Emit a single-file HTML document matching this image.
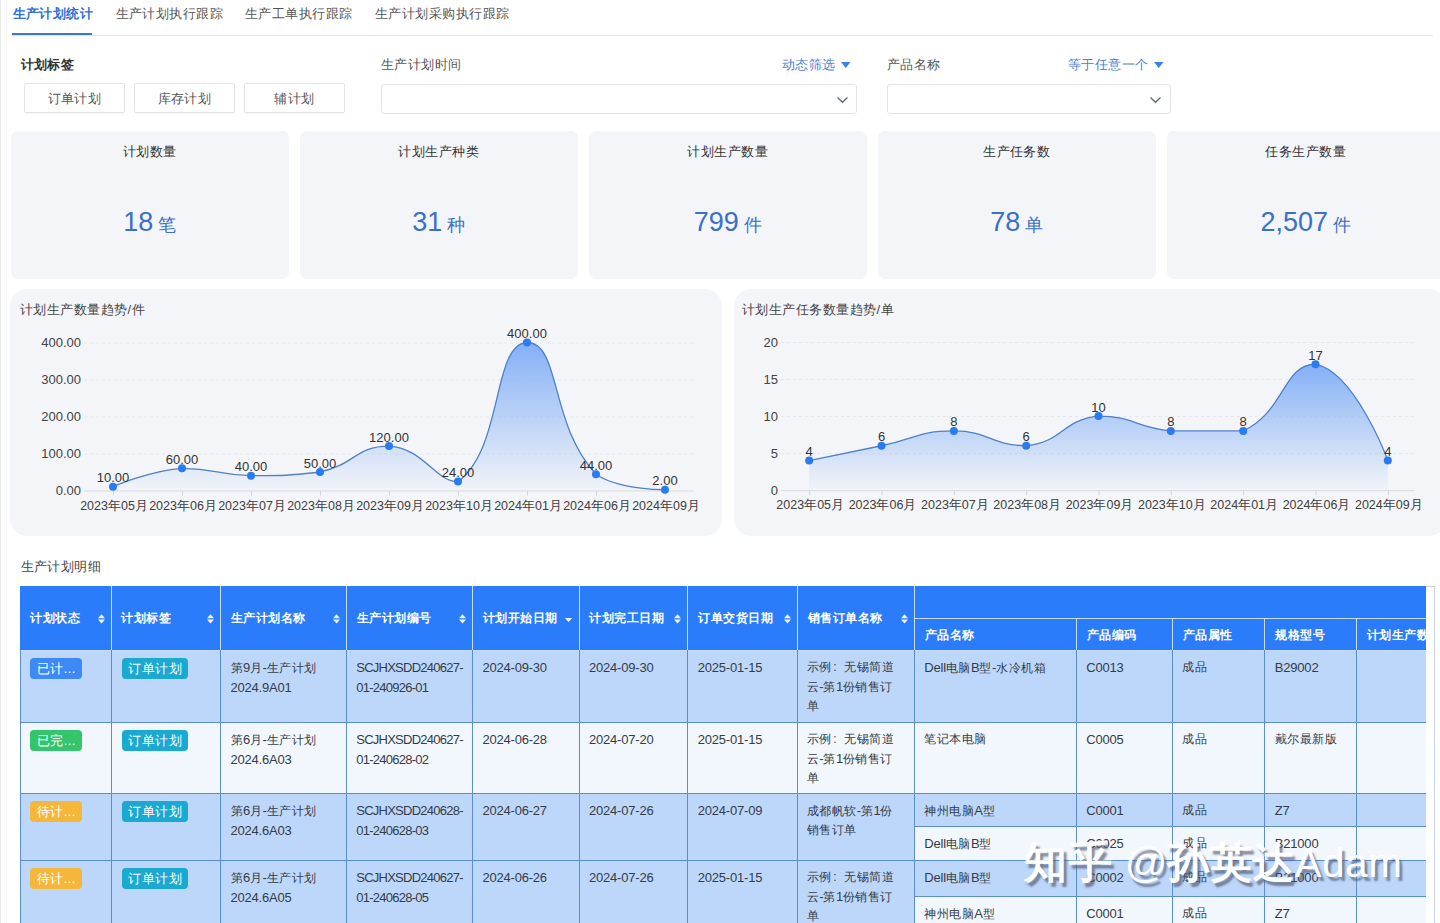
<!DOCTYPE html>
<html><head><meta charset="utf-8"><title>生产计划统计</title>
<style>
*{box-sizing:border-box;margin:0;padding:0}
html,body{width:1440px;height:923px;overflow:hidden;background:#fff;font-family:"Liberation Sans", sans-serif;color:#333}
.a{position:absolute;white-space:nowrap}
.tab{font-size:13px;letter-spacing:0.45px;line-height:16px;color:#555}
.btn{position:absolute;height:29.5px;top:83px;border:1px solid #e4e4e4;border-radius:2px;font-size:13px;letter-spacing:0.45px;line-height:28px;padding-top:1px;box-shadow:0 1px 1px rgba(0,0,0,0.03);text-align:center;color:#555;background:#fff}
.dd{position:absolute;top:84px;height:30px;border:1px solid #e1e4ea;border-radius:3px;background:#fff}
.card{position:absolute;top:131px;width:278px;height:148px;background:#f3f5f8;border-radius:7px;text-align:center}
.ct{position:absolute;left:0;right:0;top:13px;font-size:13px;letter-spacing:0.45px;line-height:16px;color:#333}
.cv{position:absolute;left:0;right:0;top:73px;line-height:36px;color:#3a70c8}
.cv b{font-weight:normal;font-size:27px}
.cv i{font-style:normal;font-size:18px;margin-left:5px}
.panel{position:absolute;top:289px;height:247px;width:712px;background:#f3f5f8;border-radius:17px}
.tb{font-size:12px;letter-spacing:0.5px;line-height:19px;color:#353c47}
.tb .l{font-size:13px;letter-spacing:-0.2px}
.tb.code .l{letter-spacing:-0.75px}
.tag{height:21px;border-radius:4px;color:#fff;font-size:13px;letter-spacing:0.45px;line-height:21px;text-align:center}
.pt{position:absolute;left:10px;top:13px;font-size:13px;letter-spacing:0.45px;line-height:16px;color:#444}
</style></head><body>

<div class="a" style="left:0;top:0;width:1px;height:923px;background:#e9e9e9"></div>
<div class="a" style="left:6px;top:0;width:1px;height:923px;background:#f6f6f6"></div>
<div class="a tab" style="left:12.5px;top:6px;color:#2f6fd6;font-weight:bold">生产计划统计</div>
<div class="a tab" style="left:115.6px;top:6px;">生产计划执行跟踪</div>
<div class="a tab" style="left:245px;top:6px;">生产工单执行跟踪</div>
<div class="a tab" style="left:375px;top:6px;">生产计划采购执行跟踪</div>
<div class="a" style="left:12px;top:35px;width:1421px;height:1px;background:#e2e5ea"></div>
<div class="a" style="left:12px;top:33px;width:80px;height:2px;background:#3a77d6"></div>
<div class="a tab" style="left:20.5px;top:57px;color:#333;font-weight:bold">计划标签</div>
<div class="btn" style="left:24px;width:101px">订单计划</div>
<div class="btn" style="left:134px;width:101px">库存计划</div>
<div class="btn" style="left:244px;width:101px">辅计划</div>
<div class="a tab" style="left:381px;top:57px;color:#555">生产计划时间</div>
<div class="a tab" style="left:782px;top:57px;color:#4a80cc">动态筛选</div>
<svg class="a" style="left:841px;top:62px" width="10" height="7"><path d="M0 0H9.5L4.75 6Z" fill="#3b7ff0"/></svg>
<div class="dd" style="left:381px;width:476px"></div>
<svg class="a" style="left:836px;top:96px" width="13" height="8"><path d="M1.5 1.5L6.5 6.3L11.5 1.5" fill="none" stroke="#5a6572" stroke-width="1.2"/></svg>
<div class="a tab" style="left:887px;top:57px;color:#555">产品名称</div>
<div class="a tab" style="left:1068px;top:57px;color:#4a80cc">等于任意一个</div>
<svg class="a" style="left:1154px;top:62px" width="10" height="7"><path d="M0 0H9.5L4.75 6Z" fill="#3b7ff0"/></svg>
<div class="dd" style="left:887px;width:284px"></div>
<svg class="a" style="left:1149px;top:96px" width="13" height="8"><path d="M1.5 1.5L6.5 6.3L11.5 1.5" fill="none" stroke="#5a6572" stroke-width="1.2"/></svg>
<div class="card" style="left:10.7px"><div class="ct">计划数量</div><div class="cv"><b>18</b><i>笔</i></div></div>
<div class="card" style="left:299.7px"><div class="ct">计划生产种类</div><div class="cv"><b>31</b><i>种</i></div></div>
<div class="card" style="left:588.7px"><div class="ct">计划生产数量</div><div class="cv"><b>799</b><i>件</i></div></div>
<div class="card" style="left:877.7px"><div class="ct">生产任务数</div><div class="cv"><b>78</b><i>单</i></div></div>
<div class="card" style="left:1166.7px"><div class="ct">任务生产数量</div><div class="cv"><b>2,507</b><i>件</i></div></div>
<div class="panel" style="left:10px"><div class="pt">计划生产数量趋势/件</div></div>
<div class="panel" style="left:734px"><div class="pt" style="left:8px">计划生产任务数量趋势/单</div></div>
<svg class="a" style="left:0;top:0" width="1440" height="923" font-family='"Liberation Sans", sans-serif'>
<defs><linearGradient id="g1" x1="0" y1="0" x2="0" y2="1"><stop offset="0" stop-color="#84b0f6"/><stop offset="1" stop-color="#84b0f6" stop-opacity="0.02"/></linearGradient></defs>
<line x1="84" y1="491.0" x2="694" y2="491.0" stroke="#d7dbe2" stroke-width="1"/>
<text x="81" y="495.0" text-anchor="end" font-size="13" fill="#444">0.00</text>
<line x1="84" y1="454.0" x2="694" y2="454.0" stroke="#e3e6ec" stroke-width="1" stroke-dasharray="3 3"/>
<text x="81" y="458.0" text-anchor="end" font-size="13" fill="#444">100.00</text>
<line x1="84" y1="417.0" x2="694" y2="417.0" stroke="#e3e6ec" stroke-width="1" stroke-dasharray="3 3"/>
<text x="81" y="421.0" text-anchor="end" font-size="13" fill="#444">200.00</text>
<line x1="84" y1="380.0" x2="694" y2="380.0" stroke="#e3e6ec" stroke-width="1" stroke-dasharray="3 3"/>
<text x="81" y="384.0" text-anchor="end" font-size="13" fill="#444">300.00</text>
<line x1="84" y1="343.0" x2="694" y2="343.0" stroke="#e3e6ec" stroke-width="1" stroke-dasharray="3 3"/>
<text x="81" y="347.0" text-anchor="end" font-size="13" fill="#444">400.00</text>
<path d="M113.00 486.80 C113.00 486.80 147.00 471.12 182.00 468.30 C216.00 468.30 216.43 474.77 251.00 475.70 C285.43 475.70 286.61 475.70 320.00 472.00 C355.61 464.36 355.39 446.10 389.00 446.10 C424.39 448.57 435.01 481.62 458.00 481.62 C504.01 447.08 491.75 344.39 527.00 342.50 C560.75 342.50 549.24 424.32 596.00 474.22 C618.24 489.76 665.00 489.76 665.00 489.76 L665.00 490.5 L113.00 490.5 Z" fill="url(#g1)"/>
<path d="M113.00 486.80 C113.00 486.80 147.00 471.12 182.00 468.30 C216.00 468.30 216.43 474.77 251.00 475.70 C285.43 475.70 286.61 475.70 320.00 472.00 C355.61 464.36 355.39 446.10 389.00 446.10 C424.39 448.57 435.01 481.62 458.00 481.62 C504.01 447.08 491.75 344.39 527.00 342.50 C560.75 342.50 549.24 424.32 596.00 474.22 C618.24 489.76 665.00 489.76 665.00 489.76" fill="none" stroke="#5080c6" stroke-width="1.3"/>
<line x1="113.5" y1="490.5" x2="113.5" y2="495.5" stroke="#d0d4db"/>
<text x="114.0" y="509.5" text-anchor="middle" font-size="12.5" fill="#404040">2023年05月</text>
<line x1="182.5" y1="490.5" x2="182.5" y2="495.5" stroke="#d0d4db"/>
<text x="183.0" y="509.5" text-anchor="middle" font-size="12.5" fill="#404040">2023年06月</text>
<line x1="251.5" y1="490.5" x2="251.5" y2="495.5" stroke="#d0d4db"/>
<text x="252.0" y="509.5" text-anchor="middle" font-size="12.5" fill="#404040">2023年07月</text>
<line x1="320.5" y1="490.5" x2="320.5" y2="495.5" stroke="#d0d4db"/>
<text x="321.0" y="509.5" text-anchor="middle" font-size="12.5" fill="#404040">2023年08月</text>
<line x1="389.5" y1="490.5" x2="389.5" y2="495.5" stroke="#d0d4db"/>
<text x="390.0" y="509.5" text-anchor="middle" font-size="12.5" fill="#404040">2023年09月</text>
<line x1="458.5" y1="490.5" x2="458.5" y2="495.5" stroke="#d0d4db"/>
<text x="459.0" y="509.5" text-anchor="middle" font-size="12.5" fill="#404040">2023年10月</text>
<line x1="527.5" y1="490.5" x2="527.5" y2="495.5" stroke="#d0d4db"/>
<text x="528.0" y="509.5" text-anchor="middle" font-size="12.5" fill="#404040">2024年01月</text>
<line x1="596.5" y1="490.5" x2="596.5" y2="495.5" stroke="#d0d4db"/>
<text x="597.0" y="509.5" text-anchor="middle" font-size="12.5" fill="#404040">2024年06月</text>
<line x1="665.5" y1="490.5" x2="665.5" y2="495.5" stroke="#d0d4db"/>
<text x="666.0" y="509.5" text-anchor="middle" font-size="12.5" fill="#404040">2024年09月</text>
<circle cx="113.0" cy="486.8" r="4" fill="#2b7bf0"/>
<text x="113.0" y="482.3" text-anchor="middle" font-size="13" fill="#333">10.00</text>
<circle cx="182.0" cy="468.3" r="4" fill="#2b7bf0"/>
<text x="182.0" y="463.8" text-anchor="middle" font-size="13" fill="#333">60.00</text>
<circle cx="251.0" cy="475.7" r="4" fill="#2b7bf0"/>
<text x="251.0" y="471.2" text-anchor="middle" font-size="13" fill="#333">40.00</text>
<circle cx="320.0" cy="472.0" r="4" fill="#2b7bf0"/>
<text x="320.0" y="467.5" text-anchor="middle" font-size="13" fill="#333">50.00</text>
<circle cx="389.0" cy="446.1" r="4" fill="#2b7bf0"/>
<text x="389.0" y="441.6" text-anchor="middle" font-size="13" fill="#333">120.00</text>
<circle cx="458.0" cy="481.6" r="4" fill="#2b7bf0"/>
<text x="458.0" y="477.1" text-anchor="middle" font-size="13" fill="#333">24.00</text>
<circle cx="527.0" cy="342.5" r="4" fill="#2b7bf0"/>
<text x="527.0" y="338.0" text-anchor="middle" font-size="13" fill="#333">400.00</text>
<circle cx="596.0" cy="474.2" r="4" fill="#2b7bf0"/>
<text x="596.0" y="469.7" text-anchor="middle" font-size="13" fill="#333">44.00</text>
<circle cx="665.0" cy="489.8" r="4" fill="#2b7bf0"/>
<text x="665.0" y="485.3" text-anchor="middle" font-size="13" fill="#333">2.00</text>
<line x1="781" y1="490.7" x2="1415" y2="490.7" stroke="#d7dbe2" stroke-width="1"/>
<text x="778" y="494.7" text-anchor="end" font-size="13" fill="#444">0</text>
<line x1="781" y1="453.6" x2="1415" y2="453.6" stroke="#e3e6ec" stroke-width="1" stroke-dasharray="3 3"/>
<text x="778" y="457.6" text-anchor="end" font-size="13" fill="#444">5</text>
<line x1="781" y1="416.6" x2="1415" y2="416.6" stroke="#e3e6ec" stroke-width="1" stroke-dasharray="3 3"/>
<text x="778" y="420.6" text-anchor="end" font-size="13" fill="#444">10</text>
<line x1="781" y1="379.5" x2="1415" y2="379.5" stroke="#e3e6ec" stroke-width="1" stroke-dasharray="3 3"/>
<text x="778" y="383.5" text-anchor="end" font-size="13" fill="#444">15</text>
<line x1="781" y1="342.5" x2="1415" y2="342.5" stroke="#e3e6ec" stroke-width="1" stroke-dasharray="3 3"/>
<text x="778" y="346.5" text-anchor="end" font-size="13" fill="#444">20</text>
<path d="M809.20 460.56 C809.20 460.56 845.37 453.15 881.53 445.74 C917.70 438.33 917.70 430.92 953.86 430.92 C990.02 430.92 991.06 445.74 1026.19 445.74 C1063.39 441.93 1061.32 419.91 1098.52 416.10 C1133.65 416.10 1134.31 427.18 1170.85 430.92 C1206.64 430.92 1212.53 430.92 1243.18 430.92 C1284.86 411.70 1282.99 364.23 1315.51 364.23 C1355.32 372.39 1387.84 460.56 1387.84 460.56 L1387.84 490.2 L809.20 490.2 Z" fill="url(#g1)"/>
<path d="M809.20 460.56 C809.20 460.56 845.37 453.15 881.53 445.74 C917.70 438.33 917.70 430.92 953.86 430.92 C990.02 430.92 991.06 445.74 1026.19 445.74 C1063.39 441.93 1061.32 419.91 1098.52 416.10 C1133.65 416.10 1134.31 427.18 1170.85 430.92 C1206.64 430.92 1212.53 430.92 1243.18 430.92 C1284.86 411.70 1282.99 364.23 1315.51 364.23 C1355.32 372.39 1387.84 460.56 1387.84 460.56" fill="none" stroke="#5080c6" stroke-width="1.3"/>
<line x1="809.7" y1="490.2" x2="809.7" y2="495.2" stroke="#d0d4db"/>
<text x="810.2" y="509.2" text-anchor="middle" font-size="12.5" fill="#404040">2023年05月</text>
<line x1="882.0" y1="490.2" x2="882.0" y2="495.2" stroke="#d0d4db"/>
<text x="882.5" y="509.2" text-anchor="middle" font-size="12.5" fill="#404040">2023年06月</text>
<line x1="954.4" y1="490.2" x2="954.4" y2="495.2" stroke="#d0d4db"/>
<text x="954.9" y="509.2" text-anchor="middle" font-size="12.5" fill="#404040">2023年07月</text>
<line x1="1026.7" y1="490.2" x2="1026.7" y2="495.2" stroke="#d0d4db"/>
<text x="1027.2" y="509.2" text-anchor="middle" font-size="12.5" fill="#404040">2023年08月</text>
<line x1="1099.0" y1="490.2" x2="1099.0" y2="495.2" stroke="#d0d4db"/>
<text x="1099.5" y="509.2" text-anchor="middle" font-size="12.5" fill="#404040">2023年09月</text>
<line x1="1171.3" y1="490.2" x2="1171.3" y2="495.2" stroke="#d0d4db"/>
<text x="1171.8" y="509.2" text-anchor="middle" font-size="12.5" fill="#404040">2023年10月</text>
<line x1="1243.7" y1="490.2" x2="1243.7" y2="495.2" stroke="#d0d4db"/>
<text x="1244.2" y="509.2" text-anchor="middle" font-size="12.5" fill="#404040">2024年01月</text>
<line x1="1316.0" y1="490.2" x2="1316.0" y2="495.2" stroke="#d0d4db"/>
<text x="1316.5" y="509.2" text-anchor="middle" font-size="12.5" fill="#404040">2024年06月</text>
<line x1="1388.3" y1="490.2" x2="1388.3" y2="495.2" stroke="#d0d4db"/>
<text x="1388.8" y="509.2" text-anchor="middle" font-size="12.5" fill="#404040">2024年09月</text>
<circle cx="809.2" cy="460.6" r="4" fill="#2b7bf0"/>
<text x="809.2" y="456.1" text-anchor="middle" font-size="13" fill="#333">4</text>
<circle cx="881.5" cy="445.7" r="4" fill="#2b7bf0"/>
<text x="881.5" y="441.2" text-anchor="middle" font-size="13" fill="#333">6</text>
<circle cx="953.9" cy="430.9" r="4" fill="#2b7bf0"/>
<text x="953.9" y="426.4" text-anchor="middle" font-size="13" fill="#333">8</text>
<circle cx="1026.2" cy="445.7" r="4" fill="#2b7bf0"/>
<text x="1026.2" y="441.2" text-anchor="middle" font-size="13" fill="#333">6</text>
<circle cx="1098.5" cy="416.1" r="4" fill="#2b7bf0"/>
<text x="1098.5" y="411.6" text-anchor="middle" font-size="13" fill="#333">10</text>
<circle cx="1170.8" cy="430.9" r="4" fill="#2b7bf0"/>
<text x="1170.8" y="426.4" text-anchor="middle" font-size="13" fill="#333">8</text>
<circle cx="1243.2" cy="430.9" r="4" fill="#2b7bf0"/>
<text x="1243.2" y="426.4" text-anchor="middle" font-size="13" fill="#333">8</text>
<circle cx="1315.5" cy="364.2" r="4" fill="#2b7bf0"/>
<text x="1315.5" y="359.7" text-anchor="middle" font-size="13" fill="#333">17</text>
<circle cx="1387.8" cy="460.6" r="4" fill="#2b7bf0"/>
<text x="1387.8" y="456.1" text-anchor="middle" font-size="13" fill="#333">4</text>
</svg>
<div class="a tab" style="left:20.5px;top:559px;color:#444">生产计划明细</div>
<div class="a" style="left:20px;top:585.5px;width:1415px;height:400px;border:1px solid #c9d3e3;background:#fff"></div>
<div class="a" style="left:20px;top:585.5px;width:1406px;height:340px;overflow:hidden">
<div class="a" style="left:0.00px;top:0.00px;width:1480.00px;height:64.50px;background:#2b7cfa"></div>
<div class="a" style="left:0.00px;top:64.50px;width:1480.00px;height:72.00px;background:#bdd7fb"></div>
<div class="a" style="left:0.00px;top:136.50px;width:1480.00px;height:71.00px;background:#f2f7fe"></div>
<div class="a" style="left:0.00px;top:207.50px;width:1480.00px;height:67.00px;background:#bdd7fb"></div>
<div class="a" style="left:894.30px;top:240.75px;width:585.70px;height:33.75px;background:#f2f7fe"></div>
<div class="a" style="left:0.00px;top:274.50px;width:1480.00px;height:140.00px;background:#bdd7fb"></div>
<div class="a" style="left:894.30px;top:310.50px;width:585.70px;height:104.00px;background:#f2f7fe"></div>
<div class="a" style="left:90.50px;top:0.00px;width:1px;height:64.50px;background:#c6defe"></div>
<div class="a" style="left:200.00px;top:0.00px;width:1px;height:64.50px;background:#c6defe"></div>
<div class="a" style="left:325.75px;top:0.00px;width:1px;height:64.50px;background:#c6defe"></div>
<div class="a" style="left:451.90px;top:0.00px;width:1px;height:64.50px;background:#c6defe"></div>
<div class="a" style="left:558.50px;top:0.00px;width:1px;height:64.50px;background:#c6defe"></div>
<div class="a" style="left:667.20px;top:0.00px;width:1px;height:64.50px;background:#c6defe"></div>
<div class="a" style="left:776.80px;top:0.00px;width:1px;height:64.50px;background:#c6defe"></div>
<div class="a" style="left:893.80px;top:0.00px;width:1px;height:64.50px;background:#c6defe"></div>
<div class="a" style="left:1055.70px;top:33.00px;width:1px;height:31.50px;background:#c6defe"></div>
<div class="a" style="left:1151.70px;top:33.00px;width:1px;height:31.50px;background:#c6defe"></div>
<div class="a" style="left:1244.30px;top:33.00px;width:1px;height:31.50px;background:#c6defe"></div>
<div class="a" style="left:1335.80px;top:33.00px;width:1px;height:31.50px;background:#c6defe"></div>
<div class="a" style="left:894.30px;top:32.50px;width:585.70px;height:1px;background:#c6defe"></div>
<div class="a" style="left:0.00px;top:64.00px;width:1480.00px;height:1px;background:#c6defe"></div>
<div class="a" style="left:0.00px;top:64.50px;width:1px;height:350.00px;background:#5b8dd2"></div>
<div class="a" style="left:90.50px;top:64.50px;width:1px;height:350.00px;background:#5b8dd2"></div>
<div class="a" style="left:200.00px;top:64.50px;width:1px;height:350.00px;background:#5b8dd2"></div>
<div class="a" style="left:325.75px;top:64.50px;width:1px;height:350.00px;background:#5b8dd2"></div>
<div class="a" style="left:451.90px;top:64.50px;width:1px;height:350.00px;background:#5b8dd2"></div>
<div class="a" style="left:558.50px;top:64.50px;width:1px;height:350.00px;background:#5b8dd2"></div>
<div class="a" style="left:667.20px;top:64.50px;width:1px;height:350.00px;background:#5b8dd2"></div>
<div class="a" style="left:776.80px;top:64.50px;width:1px;height:350.00px;background:#5b8dd2"></div>
<div class="a" style="left:893.80px;top:64.50px;width:1px;height:350.00px;background:#5b8dd2"></div>
<div class="a" style="left:1055.70px;top:64.50px;width:1px;height:350.00px;background:#5b8dd2"></div>
<div class="a" style="left:1151.70px;top:64.50px;width:1px;height:350.00px;background:#5b8dd2"></div>
<div class="a" style="left:1244.30px;top:64.50px;width:1px;height:350.00px;background:#5b8dd2"></div>
<div class="a" style="left:1335.80px;top:64.50px;width:1px;height:350.00px;background:#5b8dd2"></div>
<div class="a" style="left:0.00px;top:136.00px;width:1480.00px;height:1px;background:#5b8dd2"></div>
<div class="a" style="left:0.00px;top:207.00px;width:1480.00px;height:1px;background:#5b8dd2"></div>
<div class="a" style="left:0.00px;top:274.00px;width:1480.00px;height:1px;background:#5b8dd2"></div>
<div class="a" style="left:894.30px;top:240.25px;width:585.70px;height:1px;background:#5b8dd2"></div>
<div class="a" style="left:894.30px;top:310.00px;width:585.70px;height:1px;background:#5b8dd2"></div>
<div class="a tb " style="left:10.30px;top:23.50px;color:#fff;font-weight:bold;font-size:12px;letter-spacing:0.5px">计划状态</div>
<svg width="7" height="10" style="position:absolute;left:77.50px;top:28.30px"><path d="M0 4.2L3.5 0.2L7 4.2Z M0 5.6L3.5 9.6L7 5.6Z" fill="#eef4ff"/></svg>
<div class="a tb " style="left:101.30px;top:23.50px;color:#fff;font-weight:bold;font-size:12px;letter-spacing:0.5px">计划标签</div>
<svg width="7" height="10" style="position:absolute;left:187.00px;top:28.30px"><path d="M0 4.2L3.5 0.2L7 4.2Z M0 5.6L3.5 9.6L7 5.6Z" fill="#eef4ff"/></svg>
<div class="a tb " style="left:210.80px;top:23.50px;color:#fff;font-weight:bold;font-size:12px;letter-spacing:0.5px">生产计划名称</div>
<svg width="7" height="10" style="position:absolute;left:312.75px;top:28.30px"><path d="M0 4.2L3.5 0.2L7 4.2Z M0 5.6L3.5 9.6L7 5.6Z" fill="#eef4ff"/></svg>
<div class="a tb " style="left:336.55px;top:23.50px;color:#fff;font-weight:bold;font-size:12px;letter-spacing:0.5px">生产计划编号</div>
<svg width="7" height="10" style="position:absolute;left:438.90px;top:28.30px"><path d="M0 4.2L3.5 0.2L7 4.2Z M0 5.6L3.5 9.6L7 5.6Z" fill="#eef4ff"/></svg>
<div class="a tb " style="left:462.70px;top:23.50px;color:#fff;font-weight:bold;font-size:12px;letter-spacing:0.5px">计划开始日期</div>
<svg width="7" height="5" style="position:absolute;left:545.00px;top:32.00px"><path d="M0 0H7L3.5 4.2Z" fill="#eef4ff"/></svg>
<div class="a tb " style="left:569.30px;top:23.50px;color:#fff;font-weight:bold;font-size:12px;letter-spacing:0.5px">计划完工日期</div>
<svg width="7" height="10" style="position:absolute;left:654.20px;top:28.30px"><path d="M0 4.2L3.5 0.2L7 4.2Z M0 5.6L3.5 9.6L7 5.6Z" fill="#eef4ff"/></svg>
<div class="a tb " style="left:678.00px;top:23.50px;color:#fff;font-weight:bold;font-size:12px;letter-spacing:0.5px">订单交货日期</div>
<svg width="7" height="10" style="position:absolute;left:763.80px;top:28.30px"><path d="M0 4.2L3.5 0.2L7 4.2Z M0 5.6L3.5 9.6L7 5.6Z" fill="#eef4ff"/></svg>
<div class="a tb " style="left:787.60px;top:23.50px;color:#fff;font-weight:bold;font-size:12px;letter-spacing:0.5px">销售订单名称</div>
<svg width="7" height="10" style="position:absolute;left:880.80px;top:28.30px"><path d="M0 4.2L3.5 0.2L7 4.2Z M0 5.6L3.5 9.6L7 5.6Z" fill="#eef4ff"/></svg>
<div class="a tb " style="left:904.60px;top:40.50px;color:#fff;font-weight:bold;font-size:12px;letter-spacing:0.5px">产品名称</div>
<div class="a tb " style="left:1066.50px;top:40.50px;color:#fff;font-weight:bold;font-size:12px;letter-spacing:0.5px">产品编码</div>
<div class="a tb " style="left:1162.50px;top:40.50px;color:#fff;font-weight:bold;font-size:12px;letter-spacing:0.5px">产品属性</div>
<div class="a tb " style="left:1255.10px;top:40.50px;color:#fff;font-weight:bold;font-size:12px;letter-spacing:0.5px">规格型号</div>
<div class="a tb " style="left:1346.60px;top:40.50px;color:#fff;font-weight:bold;font-size:12px;letter-spacing:0.5px">计划生产数量</div>
<div class="a tag" style="left:10.30px;top:72.00px;width:52.10px;background:#3d8af6">已计...</div>
<div class="a tag" style="left:102.20px;top:72.00px;width:65.90px;background:#19a9d1">订单计划</div>
<div class="a tb " style="left:210.50px;top:72.50px;">第<span class="l">9</span>月<span class="l">-</span>生产计划<br><span class="l">2024.9A01</span></div>
<div class="a tb code" style="left:336.25px;top:72.50px;"><span class="l">SCJHXSDD240627-</span><br><span class="l">01-240926-01</span></div>
<div class="a tb " style="left:462.40px;top:72.50px;"><span class="l">2024-09-30</span></div>
<div class="a tb " style="left:569.00px;top:72.50px;"><span class="l">2024-09-30</span></div>
<div class="a tb " style="left:677.70px;top:72.50px;"><span class="l">2025-01-15</span></div>
<div class="a tb " style="left:786.80px;top:72.50px;">示例<span style="display:inline-block;width:12.5px;padding-left:1.5px">:</span>无锡简道<br>云<span class="l">-</span>第<span class="l">1</span>份销售订<br>单</div>
<div class="a tb " style="left:904.30px;top:72.50px;"><span class="l">Dell</span>电脑<span class="l">B</span>型<span class="l">-</span>水冷机箱</div>
<div class="a tb " style="left:1066.20px;top:72.50px;"><span class="l">C0013</span></div>
<div class="a tb " style="left:1162.20px;top:72.50px;">成品</div>
<div class="a tb " style="left:1254.80px;top:72.50px;"><span class="l">B29002</span></div>
<div class="a tag" style="left:10.30px;top:144.00px;width:52.10px;background:#33c46c">已完...</div>
<div class="a tag" style="left:102.20px;top:144.00px;width:65.90px;background:#19a9d1">订单计划</div>
<div class="a tb " style="left:210.50px;top:144.50px;">第<span class="l">6</span>月<span class="l">-</span>生产计划<br><span class="l">2024.6A03</span></div>
<div class="a tb code" style="left:336.25px;top:144.50px;"><span class="l">SCJHXSDD240627-</span><br><span class="l">01-240628-02</span></div>
<div class="a tb " style="left:462.40px;top:144.50px;"><span class="l">2024-06-28</span></div>
<div class="a tb " style="left:569.00px;top:144.50px;"><span class="l">2024-07-20</span></div>
<div class="a tb " style="left:677.70px;top:144.50px;"><span class="l">2025-01-15</span></div>
<div class="a tb " style="left:786.80px;top:144.50px;">示例<span style="display:inline-block;width:12.5px;padding-left:1.5px">:</span>无锡简道<br>云<span class="l">-</span>第<span class="l">1</span>份销售订<br>单</div>
<div class="a tb " style="left:904.30px;top:144.50px;">笔记本电脑</div>
<div class="a tb " style="left:1066.20px;top:144.50px;"><span class="l">C0005</span></div>
<div class="a tb " style="left:1162.20px;top:144.50px;">成品</div>
<div class="a tb " style="left:1254.80px;top:144.50px;">戴尔最新版</div>
<div class="a tag" style="left:10.30px;top:215.00px;width:52.10px;background:#f4b73a">待计...</div>
<div class="a tag" style="left:102.20px;top:215.00px;width:65.90px;background:#19a9d1">订单计划</div>
<div class="a tb " style="left:210.50px;top:215.50px;">第<span class="l">6</span>月<span class="l">-</span>生产计划<br><span class="l">2024.6A03</span></div>
<div class="a tb code" style="left:336.25px;top:215.50px;"><span class="l">SCJHXSDD240628-</span><br><span class="l">01-240628-03</span></div>
<div class="a tb " style="left:462.40px;top:215.50px;"><span class="l">2024-06-27</span></div>
<div class="a tb " style="left:569.00px;top:215.50px;"><span class="l">2024-07-26</span></div>
<div class="a tb " style="left:677.70px;top:215.50px;"><span class="l">2024-07-09</span></div>
<div class="a tb " style="left:786.80px;top:215.50px;">成都帆软<span class="l">-</span>第<span class="l">1</span>份<br>销售订单</div>
<div class="a tb " style="left:904.30px;top:215.50px;">神州电脑<span class="l">A</span>型</div>
<div class="a tb " style="left:1066.20px;top:215.50px;"><span class="l">C0001</span></div>
<div class="a tb " style="left:1162.20px;top:215.50px;">成品</div>
<div class="a tb " style="left:1254.80px;top:215.50px;"><span class="l">Z7</span></div>
<div class="a tb " style="left:904.30px;top:248.75px;"><span class="l">Dell</span>电脑<span class="l">B</span>型</div>
<div class="a tb " style="left:1066.20px;top:248.75px;"><span class="l">C0025</span></div>
<div class="a tb " style="left:1162.20px;top:248.75px;">成品</div>
<div class="a tb " style="left:1254.80px;top:248.75px;"><span class="l">B21000</span></div>
<div class="a tag" style="left:10.30px;top:282.00px;width:52.10px;background:#f4b73a">待计...</div>
<div class="a tag" style="left:102.20px;top:282.00px;width:65.90px;background:#19a9d1">订单计划</div>
<div class="a tb " style="left:210.50px;top:282.50px;">第<span class="l">6</span>月<span class="l">-</span>生产计划<br><span class="l">2024.6A05</span></div>
<div class="a tb code" style="left:336.25px;top:282.50px;"><span class="l">SCJHXSDD240627-</span><br><span class="l">01-240628-05</span></div>
<div class="a tb " style="left:462.40px;top:282.50px;"><span class="l">2024-06-26</span></div>
<div class="a tb " style="left:569.00px;top:282.50px;"><span class="l">2024-07-26</span></div>
<div class="a tb " style="left:677.70px;top:282.50px;"><span class="l">2025-01-15</span></div>
<div class="a tb " style="left:786.80px;top:282.50px;">示例<span style="display:inline-block;width:12.5px;padding-left:1.5px">:</span>无锡简道<br>云<span class="l">-</span>第<span class="l">1</span>份销售订<br>单</div>
<div class="a tb " style="left:904.30px;top:282.50px;"><span class="l">Dell</span>电脑<span class="l">B</span>型</div>
<div class="a tb " style="left:1066.20px;top:282.50px;"><span class="l">C0002</span></div>
<div class="a tb " style="left:1162.20px;top:282.50px;">成品</div>
<div class="a tb " style="left:1254.80px;top:282.50px;"><span class="l">B21000</span></div>
<div class="a tb " style="left:904.30px;top:318.50px;">神州电脑<span class="l">A</span>型</div>
<div class="a tb " style="left:1066.20px;top:318.50px;"><span class="l">C0001</span></div>
<div class="a tb " style="left:1162.20px;top:318.50px;">成品</div>
<div class="a tb " style="left:1254.80px;top:318.50px;"><span class="l">Z7</span></div>
</div>
<div class="a" style="left:1024px;top:838px;font-size:42px;line-height:48px;color:#fff;text-shadow:3px 4px 2px rgba(75,85,105,0.65)"><b style="font-size:43px;letter-spacing:1.5px">知乎</b> @<b style="font-size:42px;letter-spacing:0.5px">孙英达</b><span style="font-size:40px;letter-spacing:0.8px">Adam</span></div>
</body></html>
